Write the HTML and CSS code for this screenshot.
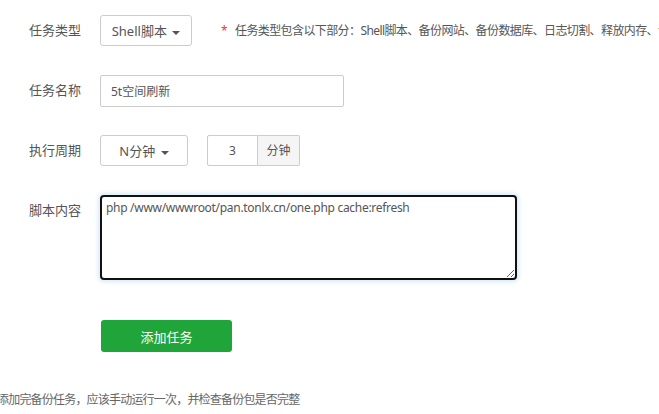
FILE: index.html
```html
<!DOCTYPE html>
<html lang="zh-CN">
<head>
    <meta charset="UTF-8">
    <title>添加计划任务</title>
    <link rel="stylesheet" href="styles.css">
</head>
<body>

    <!-- Task Form -->
    <div class="task-form">
        <div class="line short">
            <span class="tname">任务类型</span>
            <div class="info-r">
                <button class="dropdown">Shell脚本 <span class="caret"></span></button>
                <span class="hint"><em>*</em>任务类型包含以下部分：Shell脚本、备份网站、备份数据库、日志切割、释放内存、访问URL</span>
            </div>
        </div>

        <div class="line short">
            <span class="tname">任务名称</span>
            <div class="info-r">
                <input class="bt-input name-input" type="text" value="5t空间刷新">
            </div>
        </div>

        <div class="line short">
            <span class="tname">执行周期</span>
            <div class="info-r">
                <button class="dropdown cycle">N分钟 <span class="caret"></span></button>
                <div class="input-group">
                    <input class="bt-input num-input" type="text" value="3">
                    <span class="addon">分钟</span>
                </div>
            </div>
        </div>

        <div class="line">
            <span class="tname">脚本内容</span>
            <div class="info-r">
                <textarea class="script-box">php /www/wwwroot/pan.tonlx.cn/one.php cache:refresh</textarea>
            </div>
        </div>

        <div class="line submit">
            <button class="btn-success">添加任务</button>
        </div>
    </div>

    <!-- Tips -->
    <p class="tips">添加完备份任务，应该手动运行一次，并检查备份包是否完整</p>

</body>
</html>
```

FILE: styles.css
```css
/* General */
body {
    margin: 0;
    font-family: "Noto Sans", "Noto Sans CJK SC", sans-serif;
    font-size: 12px;
    color: #555;
    background: #fff;
    overflow: hidden;
}

.task-form {
    padding-top: 15px;
}

/* Rows */
.line {
    display: flex;
    align-items: flex-start;
    margin-bottom: 30px;
}

.line.short {
    height: 30px;
}

.tname {
    width: 81px;
    flex-shrink: 0;
    text-align: right;
    margin-right: 19px;
    font-size: 13px;
    line-height: 30px;
    color: #555;
}

.info-r {
    display: flex;
    align-items: flex-start;
    white-space: nowrap;
}

/* Dropdown */
.dropdown {
    height: 31px;
    width: 92px;
    padding: 0 10px;
    font-family: inherit;
    font-size: 13px;
    color: #555;
    background: #fff;
    border: 1px solid #ccc;
    border-radius: 3px;
}

.dropdown.cycle {
    width: 88px;
    margin-right: 19px;
}

.caret {
    display: inline-block;
    width: 0;
    height: 0;
    margin-left: 2px;
    vertical-align: middle;
    border-top: 4px solid #555;
    border-left: 4px solid transparent;
    border-right: 4px solid transparent;
}

.hint {
    margin-left: 29px;
    font-size: 12px;
    line-height: 31px;
    letter-spacing: -0.6px;
    color: #555;
}

.hint em {
    font-style: normal;
    color: #f33;
    margin-right: 8px;
}

/* Inputs */
.bt-input {
    height: 32px;
    box-sizing: border-box;
    padding: 0 10px;
    font-family: inherit;
    font-size: 12px;
    color: #555;
    border: 1px solid #ccc;
    border-radius: 2px;
    outline: none;
}

.name-input {
    width: 244px;
}

.input-group {
    display: flex;
}

.num-input {
    width: 51px;
    height: 31px;
    text-align: center;
    border-radius: 2px 0 0 2px;
}

.addon {
    width: 42px;
    height: 31px;
    box-sizing: border-box;
    line-height: 29px;
    text-align: center;
    font-size: 12px;
    background: #f5f5f5;
    border: 1px solid #ccc;
    border-left: none;
    border-radius: 0 2px 2px 0;
}

/* Script box */
.script-box {
    width: 417px;
    height: 85px;
    box-sizing: border-box;
    padding: 2px 4px;
    font-family: inherit;
    font-size: 12px;
    line-height: 17px;
    letter-spacing: -0.3px;
    color: #555;
    border: 2px solid #111;
    border-radius: 4px;
    box-shadow: 0 0 4px 2px rgba(102, 175, 233, 0.25);
    outline: none;
    resize: both;
}

/* Submit */
.line.submit {
    padding-left: 101px;
    margin-top: 40px;
    margin-bottom: 0;
}

.btn-success {
    width: 131px;
    height: 32px;
    font-family: inherit;
    font-size: 13px;
    color: #fff;
    background: #20a53a;
    border: none;
    border-radius: 3px;
}

/* Tips */
.tips {
    margin: 38px 0 0 -3px;
    font-size: 12px;
    letter-spacing: -0.8px;
    color: #666;
}
```
